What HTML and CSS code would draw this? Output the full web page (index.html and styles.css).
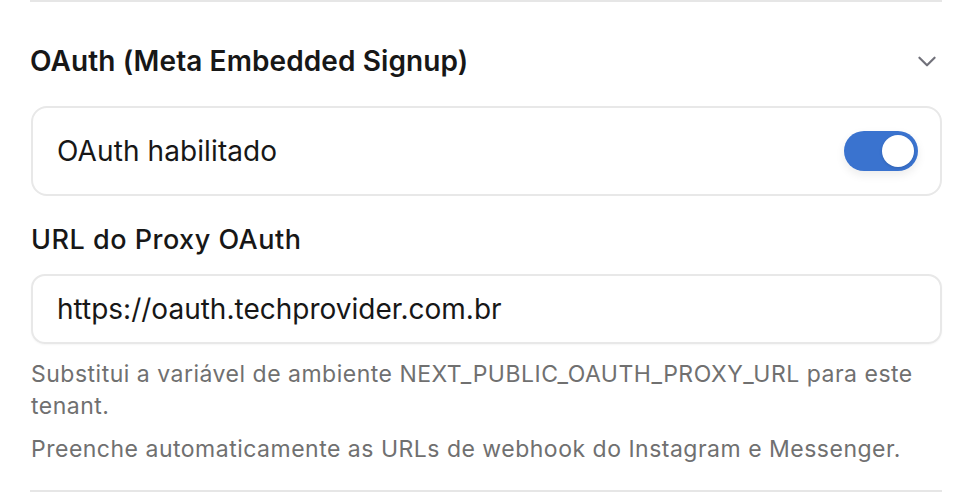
FILE: index.html
```html
<!DOCTYPE html>
<html lang="pt-BR">
<head>
<meta charset="utf-8">
<link rel="stylesheet" href="styles.css">
</head>
<body>
<div class="wrap">
  <div class="rule"></div>
  <div class="head">
    <h2 class="title">OAuth (Meta Embedded Signup)</h2>
    <svg class="chev" width="26" height="26" viewBox="0 0 24 24" fill="none" stroke="#71717a" stroke-width="2" stroke-linecap="round" stroke-linejoin="round"><path d="M5 9l7 7 7-7"/></svg>
  </div>
  <div class="card">
    <span class="card-label">OAuth habilitado</span>
    <span class="toggle"><span class="knob"></span></span>
  </div>
  <div class="label">URL do Proxy OAuth</div>
  <div class="input">https://oauth.techprovider.com.br</div>
  <p class="help">Substitui a variável de ambiente NEXT_PUBLIC_OAUTH_PROXY_URL para este tenant.</p>
  <p class="help help2">Preenche automaticamente as URLs de webhook do Instagram e Messenger.</p>
  <div class="rule bottom"></div>
</div>
</body>
</html>
```
FILE: styles.css
```css
* { box-sizing: border-box; }
html, body { margin: 0; padding: 0; background: #fff; }
body { font-family: Inter, "Noto Sans", sans-serif; color: #171717; }
.wrap { width: 912px; margin-left: 30px; }
.rule { height: 2px; background: #e6e6e6; }
.head { display: flex; align-items: center; justify-content: space-between; height: 38px; margin-top: 40px; padding-right: 2px; }
.title { margin: 0; font-size: 28px; font-weight: 600; line-height: 38px; letter-spacing: 0.1px; }
.chev { display: block; }
.card { margin-top: 26px; height: 90px; margin-left: 1px; border: 2px solid #e8e8e8; border-radius: 16px; display: flex; align-items: center; justify-content: space-between; padding: 0 22px 0 24px; }
.card-label { font-size: 28px; line-height: 32px; letter-spacing: 0.1px; }
.toggle { position: relative; width: 74px; height: 40px; border-radius: 20px; background: #3a73cf; box-shadow: 0 4px 10px rgba(0,0,0,0.08); }
.knob { position: absolute; top: 4px; right: 4px; width: 32px; height: 32px; border-radius: 50%; background: #fff; box-shadow: 0 1px 3px rgba(0,0,0,0.15); }
.label { margin-top: 28px; margin-left: 1px; font-size: 27px; font-weight: 500; line-height: 32px; letter-spacing: 0.5px; }
.input { margin-top: 18px; margin-left: 1px; height: 70px; border: 2px solid #e8e8e8; border-radius: 14px; display: flex; align-items: center; padding: 0 24px; font-size: 28px; box-shadow: 0 1px 2px rgba(0,0,0,0.04); }
.help { margin: 14px 0 0 1px; font-size: 23px; line-height: 32px; color: #707070; letter-spacing: 0.5px; padding-right: 0; }
.help2 { margin-top: 11px; }
.bottom { margin-top: 25px; }
```
